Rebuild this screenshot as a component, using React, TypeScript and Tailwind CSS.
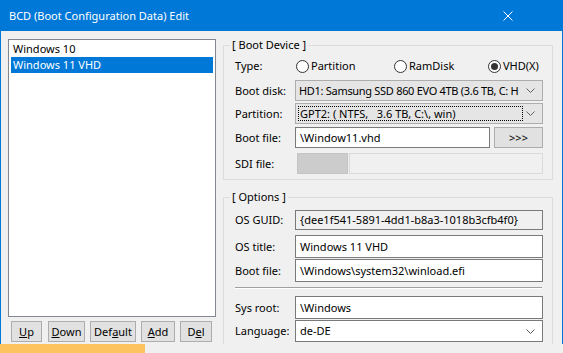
import React from 'react';

const Chevron = () => (
  <svg width="9" height="5" viewBox="0 0 9 5" className="shrink-0">
    <path d="M0.5 0.5 L4.5 4.5 L8.5 0.5" fill="none" stroke="#606060" strokeWidth="1" />
  </svg>
);

const Radio: React.FC<{ label: string; checked?: boolean; width: string }> = ({ label, checked, width }) => (
  <div className={`flex items-center ${width}`}>
    <span className="ml-[1px] flex h-[13px] w-[13px] items-center justify-center rounded-full border border-[#333333] bg-white">
      {checked && <span className="h-[7px] w-[7px] rounded-full bg-[#333333]" />}
    </span>
    <span className="ml-[2px]">{label}</span>
  </div>
);

const Row: React.FC<{ label: string; className?: string; children: React.ReactNode }> = ({ label, className, children }) => (
  <div className={`flex items-center ${className ?? ''}`}>
    <span className="w-[60px] shrink-0">{label}</span>
    {children}
  </div>
);

const App: React.FC = () => {
  return (
    <div
      className="relative h-[353px] w-[563px] overflow-hidden bg-[#f0f0f0] text-[11px] leading-[16px] text-black"
      style={{ fontFamily: '"Noto Sans", "Open Sans", sans-serif' }}
    >
      {/* title bar */}
      <div className="flex h-[31px] items-center justify-between bg-[#0078d7] pl-[9px] pr-[50px] text-white">
        <span>BCD (Boot Configuration Data) Edit</span>
        <svg width="10" height="10" viewBox="0 0 10 10">
          <path d="M0.5 0.5 L9.5 9.5 M9.5 0.5 L0.5 9.5" stroke="white" strokeWidth="1" />
        </svg>
      </div>

      {/* body */}
      <div className="flex h-[313px] overflow-hidden border-x border-[#0078d7]">
        {/* left column */}
        <div className="ml-[7px] mt-[8px] flex w-[208px] flex-col">
          <div className="h-[278px] border border-[#828790] bg-white px-[2px] pt-[1px]">
            <div className="flex h-[16px] items-center px-[2px]">Windows 10</div>
            <div className="flex h-[16px] items-center bg-[#0078d7] px-[2px] text-white">Windows 11 VHD</div>
          </div>
          <div className="mt-[4px] flex h-[21px] pl-[3px]">
            <button className="w-[31px] border border-[#adadad] bg-[#e1e1e1]"><u>U</u>p</button>
            <button className="ml-[6px] w-[37px] border border-[#adadad] bg-[#e1e1e1]"><u>D</u>own</button>
            <button className="ml-[5px] w-[46px] border border-[#adadad] bg-[#e1e1e1]">Def<u>a</u>ult</button>
            <button className="ml-[5px] w-[34px] border border-[#adadad] bg-[#e1e1e1]"><u>A</u>dd</button>
            <button className="ml-[5px] w-[32px] border border-[#adadad] bg-[#e1e1e1]">D<u>e</u>l</button>
          </div>
        </div>

        {/* right column */}
        <div className="ml-[7px] flex w-[330px] flex-col">
          {/* Boot Device */}
          <div className="relative mt-[14px] h-[135px] shrink-0 border border-[#dcdcdc] pl-[11px] pr-[8px] pt-[10px]">
            <span className="absolute -top-[9px] left-[6px] bg-[#f0f0f0] px-[2px]">[ Boot Device ]</span>
            <Row label="Type:" className="h-[20px]">
              <Radio label="Partition" width="w-[98px]" />
              <Radio label="RamDisk" width="w-[94px]" />
              <Radio label="VHD(X)" checked width="w-[56px]" />
            </Row>
            <Row label="Boot disk:" className="mt-[4px] h-[21px]">
              <div className="flex h-full w-[248px] items-center justify-between border border-[#adadad] bg-[#e5e5e5] pl-[3px] pr-[7px]">
                <span className="w-[224px] overflow-hidden whitespace-nowrap tracking-[-0.3px]">
                  HD1: Samsung SSD 860 EVO 4TB (3.6 TB, C: H
                </span>
                <Chevron />
              </div>
            </Row>
            <Row label="Partition:" className="mt-[2px] h-[21px]">
              <div className="flex h-full w-[248px] items-center justify-between border border-[#adadad] bg-[#e5e5e5] p-[2px] pr-[7px]">
                <span className="flex h-full w-[225px] items-center whitespace-pre border border-dotted border-black pl-[1px]">
                  GPT2: ( NTFS,   3.6 TB, C:\, win)
                </span>
                <Chevron />
              </div>
            </Row>
            <Row label="Boot file:" className="mt-[3px] h-[21px]">
              <div className="flex h-full w-[195px] items-center border border-[#7a7a7a] bg-white pl-[4px]">\Window11.vhd</div>
              <button className="ml-[4px] h-full w-[49px] border border-[#adadad] bg-[#e1e1e1]">&gt;&gt;&gt;</button>
            </Row>
            <Row label="SDI file:" className="mt-[5px] h-[21px]">
              <div className="ml-[2px] h-full w-[51px] border border-[#c4c4c4] bg-[#cccccc]" />
              <div className="ml-[1px] h-full w-[194px] border border-[#d9d9d9] bg-[#f0f0f0]" />
            </Row>
          </div>

          {/* Options */}
          <div className="relative mt-[17px] h-[160px] shrink-0 border border-[#dcdcdc] pl-[11px] pr-[8px] pt-[12px]">
            <span className="absolute -top-[9px] left-[6px] bg-[#f0f0f0] px-[2px]">[ Options ]</span>
            <Row label="OS GUID:" className="h-[20px]">
              <div className="flex h-full w-[248px] items-center border border-[#7a7a7a] bg-[#f0f0f0] pl-[4px]">
                {'{dee1f541-5891-4dd1-b8a3-1018b3cfb4f0}'}
              </div>
            </Row>
            <Row label="OS title:" className="mt-[5px] h-[23px]">
              <div className="flex h-full w-[248px] items-center border border-[#7a7a7a] bg-white pl-[4px]">Windows 11 VHD</div>
            </Row>
            <Row label="Boot file:" className="mt-[1px] h-[23px]">
              <div className="flex h-full w-[248px] items-center border border-[#7a7a7a] bg-white pl-[4px]">
                \Windows\system32\winload.efi
              </div>
            </Row>
            <div className="mr-[2px] mt-[5px] h-[2px] border-b border-t border-b-white border-t-[#a0a0a0]" />
            <Row label="Sys root:" className="mt-[7px] h-[23px]">
              <div className="flex h-full w-[248px] items-center border border-[#7a7a7a] bg-white pl-[4px]">\Windows</div>
            </Row>
            <Row label="Language:" className="mt-[1px] h-[22px]">
              <div className="flex h-full w-[248px] items-center justify-between border border-[#7a7a7a] bg-white pl-[4px] pr-[7px]">
                <span>de-DE</span>
                <Chevron />
              </div>
            </Row>
          </div>
        </div>
      </div>

      {/* strip below the window */}
      <div className="flex h-[9px]">
        <div className="h-full w-[145px] bg-[#fcc35f]" />
      </div>
    </div>
  );
};

export default App;
